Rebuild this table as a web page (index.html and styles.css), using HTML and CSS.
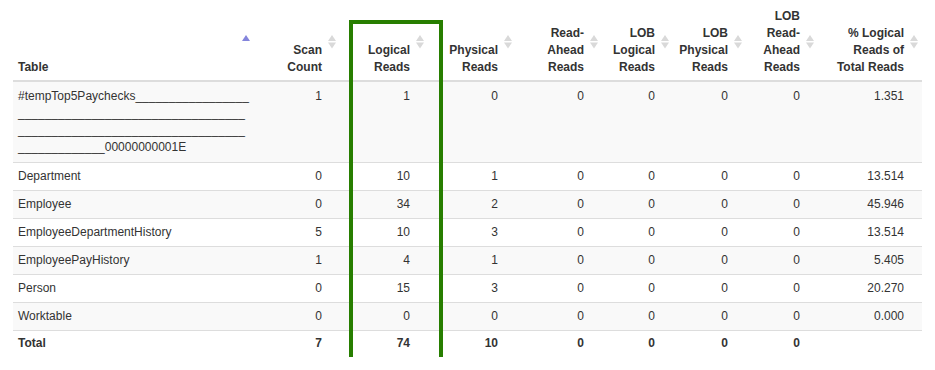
FILE: index.html
```html
<!DOCTYPE html>
<html>
<head>
<meta charset="utf-8">
<link rel="stylesheet" href="styles.css">
</head>
<body>
<div class="wrap">
  <table class="stats">
    <colgroup>
      <col class="c-name"><col class="c-86"><col class="c-88"><col class="c-88"><col class="c-86"><col class="c-71"><col class="c-73"><col class="c-72"><col class="c-104">
    </colgroup>
    <thead>
      <tr>
        <th class="left">Table<span class="sort asc"><svg width="8" height="14" viewBox="0 0 8 14"><polygon points="0,6 4,0 8,6" fill="#8485dc"/></svg></span></th>
        <th>Scan Count<span class="sort"><svg width="8" height="14" viewBox="0 0 8 14"><polygon points="0,6 4,0 8,6" fill="#d9d9d9"/><polygon points="0,7.5 8,7.5 4,13.5" fill="#d9d9d9"/></svg></span></th>
        <th>Logical Reads<span class="sort"><svg width="8" height="14" viewBox="0 0 8 14"><polygon points="0,6 4,0 8,6" fill="#d9d9d9"/><polygon points="0,7.5 8,7.5 4,13.5" fill="#d9d9d9"/></svg></span></th>
        <th>Physical Reads<span class="sort"><svg width="8" height="14" viewBox="0 0 8 14"><polygon points="0,6 4,0 8,6" fill="#d9d9d9"/><polygon points="0,7.5 8,7.5 4,13.5" fill="#d9d9d9"/></svg></span></th>
        <th>Read-Ahead Reads<span class="sort"><svg width="8" height="14" viewBox="0 0 8 14"><polygon points="0,6 4,0 8,6" fill="#d9d9d9"/><polygon points="0,7.5 8,7.5 4,13.5" fill="#d9d9d9"/></svg></span></th>
        <th>LOB Logical Reads<span class="sort"><svg width="8" height="14" viewBox="0 0 8 14"><polygon points="0,6 4,0 8,6" fill="#d9d9d9"/><polygon points="0,7.5 8,7.5 4,13.5" fill="#d9d9d9"/></svg></span></th>
        <th>LOB Physical Reads<span class="sort"><svg width="8" height="14" viewBox="0 0 8 14"><polygon points="0,6 4,0 8,6" fill="#d9d9d9"/><polygon points="0,7.5 8,7.5 4,13.5" fill="#d9d9d9"/></svg></span></th>
        <th>LOB Read-Ahead Reads<span class="sort"><svg width="8" height="14" viewBox="0 0 8 14"><polygon points="0,6 4,0 8,6" fill="#d9d9d9"/><polygon points="0,7.5 8,7.5 4,13.5" fill="#d9d9d9"/></svg></span></th>
        <th>% Logical Reads of Total Reads<span class="sort"><svg width="8" height="14" viewBox="0 0 8 14"><polygon points="0,6 4,0 8,6" fill="#d9d9d9"/><polygon points="0,7.5 8,7.5 4,13.5" fill="#d9d9d9"/></svg></span></th>
      </tr>
    </thead>
    <tbody>
      <tr class="odd first">
        <td class="name">#tempTop5Paychecks_________________<wbr>__________________________________<wbr>__________________________________<wbr>_____________00000000001E</td>
        <td>1</td><td>1</td><td>0</td><td>0</td><td>0</td><td>0</td><td>0</td><td>1.351</td>
      </tr>
      <tr>
        <td class="name">Department</td>
        <td>0</td><td>10</td><td>1</td><td>0</td><td>0</td><td>0</td><td>0</td><td>13.514</td>
      </tr>
      <tr class="odd">
        <td class="name">Employee</td>
        <td>0</td><td>34</td><td>2</td><td>0</td><td>0</td><td>0</td><td>0</td><td>45.946</td>
      </tr>
      <tr>
        <td class="name">EmployeeDepartmentHistory</td>
        <td>5</td><td>10</td><td>3</td><td>0</td><td>0</td><td>0</td><td>0</td><td>13.514</td>
      </tr>
      <tr class="odd">
        <td class="name">EmployeePayHistory</td>
        <td>1</td><td>4</td><td>1</td><td>0</td><td>0</td><td>0</td><td>0</td><td>5.405</td>
      </tr>
      <tr>
        <td class="name">Person</td>
        <td>0</td><td>15</td><td>3</td><td>0</td><td>0</td><td>0</td><td>0</td><td>20.270</td>
      </tr>
      <tr class="odd">
        <td class="name">Worktable</td>
        <td>0</td><td>0</td><td>0</td><td>0</td><td>0</td><td>0</td><td>0</td><td>0.000</td>
      </tr>
    </tbody>
    <tfoot>
      <tr>
        <td class="name">Total</td>
        <td>7</td><td>74</td><td>10</td><td>0</td><td>0</td><td>0</td><td>0</td><td></td>
      </tr>
    </tfoot>
  </table>
  <div class="highlight"></div>
</div>
</body>
</html>
```

FILE: styles.css
```css
html, body {
  margin: 0;
  padding: 0;
  background: #ffffff;
}

.wrap {
  position: relative;
  padding-left: 13px;
  font-family: "Liberation Sans", Arial, sans-serif;
  font-size: 12px;
  line-height: 17px;
  color: #333333;
}

.stats {
  border-collapse: collapse;
  table-layout: fixed;
  width: 909px;
}

.c-name { width: 241px; }
.c-86 { width: 86px; }
.c-88 { width: 88px; }
.c-71 { width: 71px; }
.c-73 { width: 73px; }
.c-72 { width: 72px; }
.c-104 { width: 104px; }

.stats th {
  position: relative;
  font-weight: bold;
  text-align: right;
  vertical-align: bottom;
  padding: 8px 18px 4px 5px;
  border-bottom: 2px solid #dddddd;
}

.stats th.left {
  text-align: left;
}

.sort {
  position: absolute;
  right: 4px;
  top: calc(50% - 5.5px);
  width: 8px;
  height: 14px;
}

.sort svg {
  display: block;
}

.stats td {
  text-align: right;
  vertical-align: top;
  padding: 5px 18px 5px 5px;
  border-top: 1px solid #dddddd;
}

.stats td.name {
  text-align: left;
  padding-right: 3px;
}

.stats tbody tr.first td {
  border-top: none;
  padding-top: 6px;
  padding-bottom: 6px;
}

.stats tbody tr.odd td {
  background: #f9f9f9;
}

.stats tfoot td {
  font-weight: bold;
  padding-top: 4px;
}

.highlight {
  position: absolute;
  left: 349px;
  top: 20px;
  width: 86px;
  height: 337px;
  border: 4px solid #277e00;
}
```
